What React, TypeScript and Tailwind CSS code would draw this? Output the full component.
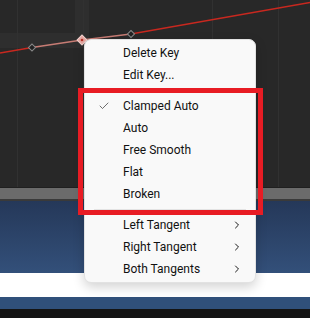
import { ChevronRight, Check } from "lucide-react";

const topItems = ["Delete Key", "Edit Key..."];
const modes = ["Clamped Auto", "Auto", "Free Smooth", "Flat", "Broken"];
const tangents = ["Left Tangent", "Right Tangent", "Both Tangents"];

function Row({ label, checked, sub }: { label: string; checked?: boolean; sub?: boolean }) {
  return (
    <div className="flex h-[22px] items-center">
      <div className="flex w-[38px] justify-end pr-[13px]">
        {checked && <Check size={12} strokeWidth={1.4} className="text-[#333]" />}
      </div>
      <span className="flex-1">{label}</span>
      {sub && <ChevronRight size={12} strokeWidth={2} className="mr-[12px] text-[#1a1a1a]" />}
    </div>
  );
}

function Sep() {
  return (
    <div className="flex h-[9px] items-center px-[9px]">
      <div className="h-px w-full bg-[#e3e3e3]" />
    </div>
  );
}

function CurveCanvas() {
  return (
    <svg width="310" height="187" className="block">
      <rect x="0" y="33" width="89" height="15" fill="#2e2e2e" />
      <rect x="75" y="0" width="14" height="33" fill="#2e2e2e" />
      {[17, 83, 212, 278].map((x) => (
        <line key={x} x1={x + 0.5} y1="0" x2={x + 0.5} y2="187" stroke="#313131" strokeWidth="1" />
      ))}
      <polyline points="0,53 32,47.5" fill="none" stroke="#c8281f" strokeWidth="1.4" />
      <polyline points="32,47.5 82,40 131,34" fill="none" stroke="#c77c74" strokeWidth="1.4" />
      <polyline points="131,34 310,2.5" fill="none" stroke="#c8281f" strokeWidth="1.4" />
      <rect x="29.5" y="45" width="5" height="5" transform="rotate(45 32 47.5)" fill="#222" stroke="#8a8a8a" strokeWidth="1" />
      <rect x="128.5" y="31.5" width="5" height="5" transform="rotate(45 131 34)" fill="#222" stroke="#8a8a8a" strokeWidth="1" />
      <rect x="78.5" y="36.5" width="7" height="7" transform="rotate(45 82 40)" fill="#e6a8a2" stroke="#f2d2ce" strokeWidth="1" />
      <circle cx="82" cy="40" r="1.3" fill="#b9332a" />
    </svg>
  );
}

export default function App() {
  return (
    <div className="relative h-[318px] w-[310px] overflow-hidden bg-[#141414] font-['Roboto',sans-serif]">
      <div className="flex flex-col">
        <div className="h-[187px] bg-[#282828]">
          <CurveCanvas />
        </div>
        <div className="h-px bg-[#1f1f1f]" />
        <div className="h-[11px] bg-[#6b6b6b]" />
        <div className="h-[2px] bg-[#3a3a3a]" />
        <div className="h-[72px] bg-gradient-to-b from-[#253859] to-[#33507a]" />
        <div className="h-[24px] bg-white" />
        <div className="h-[12px] bg-[#30507a]" />
      </div>

      <div className="absolute left-[84px] top-[39px] w-[172px] rounded-[7px] border border-[#e2e2e2] bg-[#f9f9f9] pb-[2px] pt-[2px] text-[12px] text-[#111] shadow-[0_4px_12px_rgba(0,0,0,0.18)]">
        {topItems.map((t) => (
          <Row key={t} label={t} />
        ))}
        <Sep />
        {modes.map((t, i) => (
          <Row key={t} label={t} checked={i === 0} />
        ))}
        <Sep />
        {tangents.map((t) => (
          <Row key={t} label={t} sub />
        ))}
      </div>

      <div className="absolute left-[78px] top-[88px] h-[127px] w-[185px] border-[5px] border-[#e81c24]" />
    </div>
  );
}
